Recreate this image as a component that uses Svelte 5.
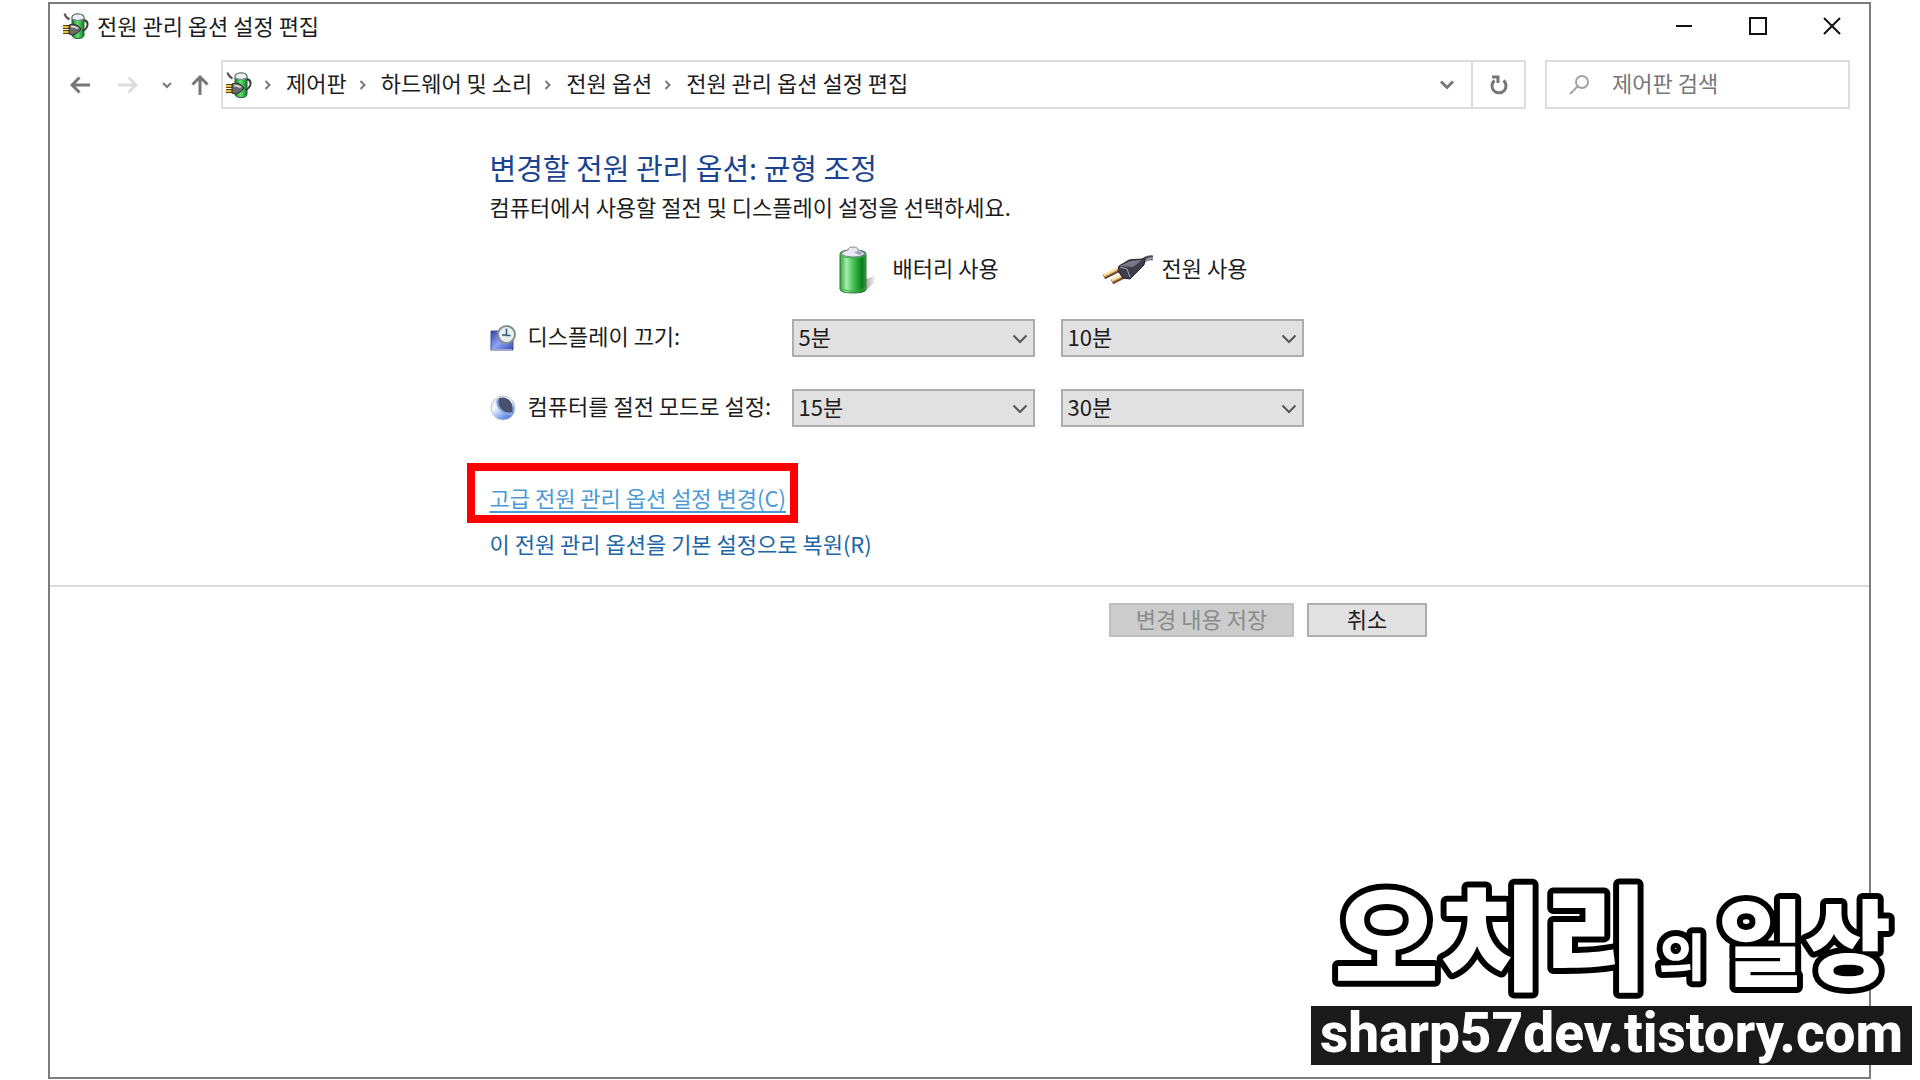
<script module lang="ts">
	// ===== TYPES =====
	interface PowerRow {
		id: string;
		label: string;
		battery: string;
		plugged: string;
	}
</script>

<script lang="ts">
	// ===== DATA =====
	const title = '전원 관리 옵션 설정 편집';
	const crumbs = ['제어판', '하드웨어 및 소리', '전원 옵션', title];
	const durations = ['1분', '2분', '3분', '5분', '10분', '15분', '20분', '25분', '30분', '45분', '1시간', '해당 없음'];

	// ===== STATE =====
	let rows: PowerRow[] = $state([
		{ id: 'display', label: '디스플레이 끄기:', battery: '5분', plugged: '10분' },
		{ id: 'sleep', label: '컴퓨터를 절전 모드로 설정:', battery: '15분', plugged: '30분' }
	]);
	let search = $state('');
</script>

{#snippet powerIcon()}
	<svg class="power-icon" viewBox="0 0 26 28" width="26" height="28" aria-hidden="true">
		<defs>
			<linearGradient id="cell" x1="0" x2="1">
				<stop offset="0" stop-color="#1c7a2c" />
				<stop offset=".45" stop-color="#5fe070" />
				<stop offset="1" stop-color="#15802a" />
			</linearGradient>
		</defs>
		<path d="M9 5q0-3 6-3t6 3v18q0 3.500-6 3.500t-6-3.500z" fill="url(#cell)" stroke="#2c5c34" />
		<path d="M9 7q0-5 6-5t6 5q-6 3-12 0z" fill="#edf0f8" stroke="#7b7f92" />
		<path d="M1.500 1.500q1 4 5 6" fill="none" stroke="#555" stroke-width="2" />
		<path d="M21 8q4 1 3.500 5t-5 6" fill="none" stroke="#3b3b3b" stroke-width="2" />
		<path d="M0 15h6M0 20h6" stroke="#55420c" stroke-width="4" />
		<path d="M0 15h6M0 20h6" stroke="#f0c33c" stroke-width="2" />
		<path d="M6 13l4-1q6 1 8 5-2 4-8 6l-4-1z" fill="#6b6b6b" stroke="#292929" />
		<path d="M8 14.500q4 0 7 2" fill="none" stroke="#d4d4d4" stroke-width="2" />
	</svg>
{/snippet}

{#snippet chevronRight()}
	<svg class="separator" viewBox="0 0 8 12" width="8" height="12" aria-hidden="true">
		<path d="M1.500 2l4 4-4 4" />
	</svg>
{/snippet}

{#snippet durationSelect(row: PowerRow, key: 'battery' | 'plugged')}
	<div class="select">
		<select id="{row.id}-{key}" aria-labelledby="{row.id}-label {key}-label" bind:value={row[key]}>
			{#each durations as duration}
				<option>{duration}</option>
			{/each}
		</select>
		<svg viewBox="0 0 16 10" width="16" height="10" aria-hidden="true">
			<path d="M1.500 1.500l6.500 6.500 6.500-6.500" />
		</svg>
	</div>
{/snippet}

<div class="desktop">
	<div class="window">
		<header class="titlebar">
			{@render powerIcon()}
			<span class="title">{title}</span>
			<div class="controls">
				<button aria-label="최소화">
					<svg viewBox="0 0 18 18" width="18" height="18"><path d="M1 9h16" /></svg>
				</button>
				<button aria-label="최대화">
					<svg viewBox="0 0 18 18" width="18" height="18"><path d="M1 1h16v16H1z" /></svg>
				</button>
				<button aria-label="닫기">
					<svg viewBox="0 0 18 18" width="18" height="18"><path d="M1 1l16 16M17 1L1 17" /></svg>
				</button>
			</div>
		</header>

		<div class="toolbar">
			<nav class="history">
				<button aria-label="뒤로">
					<svg viewBox="0 0 20 18" width="20" height="18"><path d="M20 9H2M9.500 1.500L2 9l7.500 7.500" /></svg>
				</button>
				<button aria-label="앞으로" disabled>
					<svg viewBox="0 0 20 18" width="20" height="18"><path d="M0 9h18M10.500 1.500L18 9l-7.500 7.500" /></svg>
				</button>
				<button class="recent" aria-label="최근 위치">
					<svg viewBox="0 0 10 8" width="10" height="8"><path d="M1 2l4 4 4-4" /></svg>
				</button>
				<button class="up" aria-label="위로">
					<svg viewBox="0 0 18 20" width="18" height="20"><path d="M9 20V2M1.500 9.500L9 2l7.500 7.500" /></svg>
				</button>
			</nav>

			<div class="address">
				{@render powerIcon()}
				<nav class="crumbs">
					{#each crumbs as crumb}
						{@render chevronRight()}
						<a href="#top">{crumb}</a>
					{/each}
				</nav>
				<button class="dropdown" aria-label="이전 위치">
					<svg viewBox="0 0 16 10" width="16" height="10"><path d="M2 1.500l6 6 6-6" /></svg>
				</button>
				<button class="refresh" aria-label="새로 고침">
					<svg viewBox="0 0 18 20" width="18" height="20">
						<path d="M13.500 5.500a7 7 0 1 1-9 0M2 2h6v6" />
					</svg>
				</button>
			</div>

			<label class="search">
				<svg viewBox="0 0 20 20" width="20" height="20" aria-hidden="true">
					<circle cx="13" cy="7" r="6" />
					<path d="M8.500 11.500L1 19" />
				</svg>
				<input type="text" placeholder="제어판 검색" aria-label="제어판 검색" bind:value={search} />
			</label>
		</div>

		<main>
			<h1>변경할 전원 관리 옵션: 균형 조정</h1>
			<p>컴퓨터에서 사용할 절전 및 디스플레이 설정을 선택하세요.</p>

			<div class="settings">
				<div class="column-head first">
					<svg viewBox="0 0 50 48" width="50" height="48" aria-hidden="true">
						<defs>
							<linearGradient id="green" x1="0" x2="1">
								<stop offset="0" stop-color="#38a346" />
								<stop offset=".25" stop-color="#a5efaa" />
								<stop offset=".5" stop-color="#4cc458" />
								<stop offset=".85" stop-color="#087d19" />
								<stop offset="1" stop-color="#3a9c48" />
							</linearGradient>
							<linearGradient id="shadow" x1="0" x2="1">
								<stop offset="0" stop-color="#999" />
								<stop offset="1" stop-color="#fff" />
							</linearGradient>
						</defs>
						<path d="M30 34l12-5-2 8-10 9z" fill="url(#shadow)" />
						<path d="M6 8q0-4 13-4t13 4v35q0 4-13 4t-13-4z" fill="url(#green)" stroke="#33753b" />
						<path d="M7 8q2-3 7-4 0-3 5-3t5 3q5 1 7 4-4 3-12 3t-12-3z" fill="#e7e9f3" stroke="#8588a0" />
						<path d="M20 6l5 3 4-2-5-2z" fill="#a39fc2" />
						<path d="M6 9q4 3 13 3t13-3M6 42q4 3 13 3t13-3" fill="none" stroke="#35b448" />
					</svg>
					<span id="battery-label">배터리 사용</span>
				</div>
				<div class="column-head">
					<svg viewBox="0 0 50 48" width="50" height="48" aria-hidden="true">
						<path d="M38 17q5-6 12-5" fill="none" stroke="#4f4f5b" stroke-width="5" />
						<path d="M42 15q4-3 8-3" fill="none" stroke="#9b9ba5" stroke-width="2" />
						<path d="M1 31l16-8M9 36l16-8" stroke="#6b4c30" stroke-width="5" />
						<path d="M1 30l16-8M9 35l16-8" stroke="#dca566" stroke-width="3" />
						<path d="M1 29l14-7M9 34l14-7" stroke="#ffe4af" stroke-width="2" />
						<path d="M16 20l10-6q7-1 16-1l-1 6-6 6-8 8-7-1-5-7z" fill="#3d3d4c" stroke="#24242f" />
						<path d="M17 20l10-5 12-1-9 7z" fill="#777785" />
						<path d="M17 21l7 2 3 8" fill="none" stroke="#a2a2af" />
					</svg>
					<span id="plugged-label">전원 사용</span>
				</div>

				{#each rows as row (row.id)}
					<label class="row-label" id="{row.id}-label" for="{row.id}-battery">
						{#if row.id === 'display'}
							<svg viewBox="0 0 26 26" width="26" height="26" aria-hidden="true">
								<defs>
									<linearGradient id="screen" x1="0" y1="0" x2="1" y2="1">
										<stop offset="0" stop-color="#3340a8" />
										<stop offset=".5" stop-color="#8fa3f4" />
										<stop offset="1" stop-color="#3547ba" />
									</linearGradient>
								</defs>
								<path d="M1 6h22v19H1z" fill="url(#screen)" stroke="#46509d" />
								<path d="M2 24.500h20" stroke="#a3a9cc" />
								<circle cx="16.500" cy="9.500" r="8.500" fill="#e6f0f2" stroke="#85908f" stroke-width="2" />
								<path d="M16.500 3.500v7h4M12 10h4" fill="none" stroke="#38566f" stroke-width="1.500" />
							</svg>
						{:else}
							<svg viewBox="0 0 26 26" width="26" height="26" aria-hidden="true">
								<defs>
									<linearGradient id="moon" x1="0" y1="0" x2=".6" y2="1">
										<stop offset="0" stop-color="#d5dae3" />
										<stop offset=".45" stop-color="#f6f9ff" />
										<stop offset="1" stop-color="#4c7ee0" />
									</linearGradient>
								</defs>
								<circle cx="13" cy="13" r="12" fill="url(#moon)" stroke="#bcc9dc" />
								<path d="M9 3q7-2 11 3t2 11q-8 2-12-4t-1-10z" fill="#48526e" />
								<path d="M8 4q-2 6 3 11t11 4" fill="none" stroke="#87a5e5" stroke-width="2" />
							</svg>
						{/if}
						<span>{row.label}</span>
					</label>
					{@render durationSelect(row, 'battery')}
					{@render durationSelect(row, 'plugged')}
				{/each}
			</div>

			<div class="links">
				<a class="advanced" href="#advanced">고급 전원 관리 옵션 설정 변경(C)</a>
				<a href="#restore">이 전원 관리 옵션을 기본 설정으로 복원(R)</a>
			</div>
		</main>

		<footer>
			<div class="actions">
				<button class="save" disabled>변경 내용 저장</button>
				<button class="cancel">취소</button>
			</div>
		</footer>
	</div>

	<aside class="watermark">
		<svg class="brand" viewBox="0 0 601 128" width="601" height="128">
			<text class="large" x="23" y="103">오치리</text>
			<text class="small" x="348" y="98">의</text>
			<text class="medium" x="407" y="101">일상</text>
		</svg>
		<div class="site">sharp57dev.tistory.com</div>
	</aside>
</div>

<style>
	:global(body) {
		background: #fff;
	}

	.desktop {
		/* Layout */
		position: relative;
		box-sizing: border-box;
		display: flex;
		min-height: 100vh;
		padding: 2px 49px 1px 48px;

		/* Text */
		font-family: "Noto Sans CJK KR", sans-serif;
		font-size: 22px;
		line-height: 28px;
		color: #1c1c1c;
	}

	.window {
		flex: 1;
		min-width: 0;
		border: 2px solid #7c7c7c;
		background: #fff;
	}

	svg {
		flex: none;
	}

	button {
		display: flex;
		align-items: center;
		justify-content: center;
		padding: 0;
		border: 0;
		background: transparent;
		font: inherit;
		color: inherit;
	}

	button svg,
	.separator,
	.select svg,
	.search svg {
		fill: none;
		stroke: currentColor;
		stroke-width: 2;
	}

	a {
		color: inherit;
		text-decoration: none;
	}

	/* ===== Title bar ===== */
	.titlebar {
		display: flex;
		align-items: center;
		height: 44px;
		padding-left: 13px;
	}

	.title {
		margin-left: 8px;
		padding-bottom: 2px;
	}

	.controls {
		display: flex;
		align-self: stretch;
		margin-left: auto;
		color: #111;
	}

	.controls button {
		width: 74px;
	}

	/* ===== Toolbar ===== */
	.toolbar {
		display: flex;
		align-items: center;
		height: 49px;
		padding: 12px 19px 0 20px;
	}

	.history {
		display: flex;
		align-items: center;
		color: #777;
	}

	.history button {
		margin-right: 28px;
	}

	.history button svg {
		stroke-width: 3;
	}

	.history button:disabled {
		color: #ddd;
		margin-right: 24px;
	}

	.history .recent {
		margin-right: 19px;
	}

	.history .recent svg {
		stroke-width: 2;
	}

	.history .up {
		margin-right: 12px;
	}

	.address,
	.search {
		box-sizing: border-box;
		display: flex;
		align-items: center;
		height: 49px;
		border: 2px solid #ddd;
	}

	.address {
		flex: 1;
		padding-left: 3px;
	}

	.crumbs {
		display: flex;
		align-items: center;
		white-space: nowrap;
	}

	.crumbs a {
		padding-bottom: 6px;
	}

	.separator {
		margin: 0 14px 0 12px;
		color: #777;
	}

	.dropdown {
		width: 48px;
		margin-left: auto;
		color: #777;
	}

	.dropdown svg,
	.refresh svg {
		stroke-width: 3;
	}

	.refresh {
		align-self: stretch;
		width: 53px;
		border-left: 2px solid #ddd;
		color: #777;
	}

	.search {
		width: 305px;
		margin-left: 19px;
		padding-left: 22px;
		color: #a3a3a3;
	}

	.search input {
		min-width: 0;
		flex: 1;
		margin-left: 23px;
		padding: 0 0 6px;
		border: 0;
		outline: 0;
		background: transparent;
		font: inherit;
		color: #1c1c1c;
	}

	.search input::placeholder {
		color: #777;
		opacity: 1;
	}

	/* ===== Settings ===== */
	main,
	.actions {
		max-width: 100%;
		margin: 0 auto;
	}

	main {
		width: 940px;
		padding: 40px 0 28px;
	}

	h1 {
		margin: 0;
		font-size: 29px;
		font-weight: 400;
		line-height: 36px;
		color: #1c4390;
	}

	p {
		margin: 7px 0 0;
	}

	.settings {
		display: grid;
		grid-template-columns: 276px 243px 243px;
		gap: 32px 26px;
		align-items: center;
		margin-top: 26px;
		white-space: nowrap;
	}

	.column-head {
		display: flex;
		align-items: center;
		gap: 9px;
		height: 48px;
		margin-bottom: -7px;
		padding-left: 42px;
	}

	.column-head span {
		padding-bottom: 6px;
	}

	.column-head.first {
		grid-column: 2;
	}

	.row-label {
		display: flex;
		align-items: center;
		gap: 12px;
	}

	.row-label span {
		padding-bottom: 6px;
	}

	.select {
		position: relative;
	}

	select {
		display: block;
		box-sizing: border-box;
		width: 100%;
		height: 38px;
		padding: 0 32px 4px 5px;
		border: 2px solid #adadad;
		border-radius: 0;
		appearance: none;
		background: #e1e1e1;
		font: inherit;
		color: inherit;
	}

	.select svg {
		position: absolute;
		top: 15px;
		right: 7px;
		color: #555;
		pointer-events: none;
	}

	.links {
		display: flex;
		flex-direction: column;
		align-items: flex-start;
		gap: 18px;
		margin-top: 56px;
		color: #2065a6;
	}

	.advanced {
		position: relative;
		color: #4b9ad8;
		text-decoration: underline;
		text-decoration-thickness: 2px;
		text-underline-offset: 4px;
	}

	.advanced::after {
		content: "";
		position: absolute;
		inset: -20px -12px -12px -23px;
		border: 8px solid #f00;
	}

	/* ===== Footer ===== */
	footer {
		border-top: 2px solid #d9d9d9;
		padding-top: 16px;
	}

	.actions {
		display: flex;
		justify-content: flex-end;
		gap: 13px;
		width: 935px;
	}

	.actions button {
		box-sizing: border-box;
		width: 120px;
		height: 34px;
		padding-bottom: 4px;
		border: 2px solid #adadad;
		background: #e1e1e1;
	}

	.actions .save {
		width: 185px;
		border-color: #bfbfbf;
		background: #ccc;
		color: #8b8b8b;
	}

	/* ===== Watermark ===== */
	.watermark {
		position: absolute;
		right: 8px;
		bottom: 15px;
		width: 601px;
		white-space: nowrap;
	}

	.brand {
		display: block;
		overflow: visible;
		font-weight: 900;
		fill: #fff;
		stroke: #000;
		stroke-width: 12px;
		stroke-linejoin: round;
		paint-order: stroke fill;
	}

	.large {
		font-size: 114px;
	}

	.small {
		font-size: 50px;
	}

	.medium {
		font-size: 94px;
	}

	.site {
		height: 59px;
		background: #1a1a1a;
		font-family: Roboto, sans-serif;
		font-size: 55px;
		font-weight: 800;
		line-height: 55px;
		text-align: center;
		color: #fff;
	}
</style>
